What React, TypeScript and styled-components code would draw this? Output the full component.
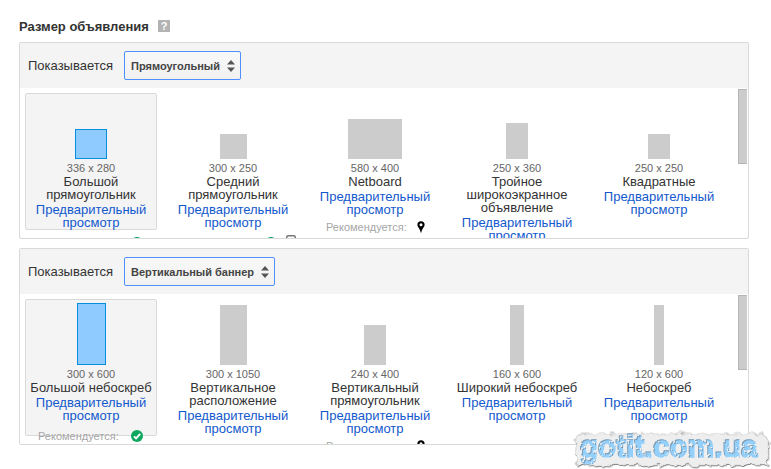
import React from 'react';
import styled, { createGlobalStyle, css } from 'styled-components';

const GlobalStyle = createGlobalStyle`
  * { box-sizing: border-box; }
  body {
    margin: 0;
    background: #fff;
    color: #333;
    font-family: 'Liberation Sans', Arial, sans-serif;
    font-size: 13px;
  }
`;

const Page = styled.main`
  position: relative;
  width: 771px;
  height: 469px;
  padding: 19px 0 0 19px;
  overflow: hidden;
`;

const TitleRow = styled.header`
  display: flex;
  align-items: center;
  gap: 9px;
  height: 15px;
  margin-bottom: 8px;
`;

const Title = styled.h1`
  margin: 0;
  width: 130px;
  font-size: 13px;
  line-height: 15px;
  font-weight: bold;
  white-space: nowrap;
`;

const Help = styled.span`
  display: grid;
  place-items: center;
  width: 12px;
  height: 12px;
  margin-top: -1px;
  background: #b3b3b3;
  color: #fff;
  font-size: 11px;
  line-height: 12px;
  font-weight: bold;
`;

const Panel = styled.section`
  width: 730px;
  height: 197px;
  margin-bottom: 9px;
  border: 1px solid #d9d9d9;
  border-radius: 2px;
  overflow: hidden;
`;

const Toolbar = styled.div`
  display: flex;
  align-items: center;
  height: 45px;
  padding-left: 8px;
  background: #f4f4f4;
`;

const Label = styled.span`
  width: 96px;
  line-height: 15px;
  margin-top: -1px;
`;

const Select = styled.button<{ $width: number }>`
  display: flex;
  align-items: center;
  justify-content: space-between;
  width: ${(p) => p.$width}px;
  height: 29px;
  padding: 0 5px 0 6px;
  border: 1px solid #4d90fe;
  border-radius: 2px;
  background: linear-gradient(#f8f8f8, #f1f1f1);
  color: #444;
  font: bold 11px 'Liberation Sans', Arial, sans-serif;
  white-space: nowrap;
`;

const Viewport = styled.div`
  display: flex;
  justify-content: space-between;
  height: 150px;
  padding: 0 1px 0 5px;
  overflow: hidden;
`;

const Thumb = styled.div`
  width: 9px;
  height: 75px;
  margin-top: 1px;
  border: 1px solid #b5b5b5;
  border-right: 0;
  background: #ccc;
`;

const Cells = styled.div`
  display: grid;
  grid-template-columns: repeat(5, 132px);
  column-gap: 10px;
  padding-top: 5px;
`;

const Cell = styled.article<{ $selected?: boolean }>`
  display: flex;
  flex-direction: column;
  align-items: center;
  height: 137px;
  border: 1px solid transparent;
  border-radius: 2px;
  text-align: center;
  ${(p) =>
    p.$selected &&
    css`
      border-color: #d9d9d9;
      background: #f4f4f4;
    `}
`;

const Stage = styled.div`
  display: flex;
  flex: none;
  align-items: flex-end;
  justify-content: center;
  height: 65px;
`;

const Shape = styled.div<{ $w: number; $h: number; $selected?: boolean }>`
  width: ${(p) => p.$w}px;
  height: ${(p) => p.$h}px;
  background: ${(p) => (p.$selected ? '#8fcbff' : '#ccc')};
  border: ${(p) => (p.$selected ? '1px solid #058dde' : '0')};
`;

const Dimensions = styled.div`
  margin-top: 3px;
  font-size: 11px;
  line-height: 13px;
  color: #666;
`;

const Name = styled.div`
  line-height: 13px;
  white-space: pre;
`;

const Preview = styled.a`
  margin-top: 2px;
  line-height: 13px;
  color: #1259cd;
  white-space: pre;
`;

const Recommended = styled.div<{ $kind: BadgeKind }>`
  display: flex;
  align-items: center;
  align-self: flex-start;
  flex: none;
  gap: ${(p) => (p.$kind === 'pin' ? 10 : 12)}px;
  height: 14px;
  margin-top: ${(p) => (p.$kind === 'pin' ? 4 : 7)}px;
  padding-left: ${(p) => ({ check: 12, pin: 16, 'check-phone': 4 })[p.$kind]}px;
  font-size: 11px;
  line-height: 14px;
  color: #a6a6a6;
  text-align: left;
`;

const RecommendedText = styled.span`
  width: 81px;
`;

const Badges = styled.span`
  display: flex;
  flex: none;
  align-items: center;
  gap: 9px;
  height: 14px;
`;

const WatermarkLayer = styled.svg`
  position: absolute;
  left: 570px;
  top: 427px;
`;

const Arrows = () => (
  <svg width="8" height="12" viewBox="0 0 8 12">
    <path d="M4 0 8 4.5H0zM0 7.5h8L4 12z" fill="#555" />
  </svg>
);

const CheckIcon = () => (
  <svg width="12" height="12" viewBox="0 0 12 12">
    <circle cx="6" cy="6" r="6" fill="#0fa760" />
    <path d="m3 6.3 2.1 2.1L9.2 3.9" fill="none" stroke="#fff" strokeWidth="1.9" />
  </svg>
);

const PinIcon = () => (
  <svg width="8" height="12" viewBox="0 0 8 12">
    <path
      d="M4 .2a3.6 3.6 0 0 1 3.6 3.6C7.6 6.3 4.6 8 4.4 11.6h-.8C3.4 8 .4 6.3.4 3.8A3.6 3.6 0 0 1 4 .2zm0 2a1.5 1.5 0 1 0 0 3 1.5 1.5 0 0 0 0-3z"
      fill="#000"
      fillRule="evenodd"
    />
  </svg>
);

const PhoneIcon = () => (
  <svg width="10" height="16" viewBox="0 0 10 16">
    <rect x=".75" y=".75" width="8.5" height="14.5" rx="1.5" fill="#fff" stroke="#777" strokeWidth="1.5" />
    <path d="M1 12h8" stroke="#999" />
  </svg>
);

type BadgeKind = 'check' | 'pin' | 'check-phone';

interface AdSize {
  size: string;
  name: string;
  w: number;
  h: number;
  selected?: boolean;
  badge?: BadgeKind;
}

const rectangles: AdSize[] = [
  { size: '336 x 280', name: 'Большой\nпрямоугольник', w: 32, h: 30, selected: true, badge: 'check' },
  { size: '300 x 250', name: 'Средний\nпрямоугольник', w: 27, h: 25, badge: 'check-phone' },
  { size: '580 x 400', name: 'Netboard', w: 54, h: 40, badge: 'pin' },
  { size: '250 x 360', name: 'Тройное\nширокоэкранное\nобъявление', w: 22, h: 36 },
  { size: '250 x 250', name: 'Квадратные', w: 22, h: 25 },
];

const verticals: AdSize[] = [
  { size: '300 x 600', name: 'Большой небоскреб', w: 29, h: 62, selected: true, badge: 'check' },
  { size: '300 x 1050', name: 'Вертикальное\nрасположение', w: 27, h: 60 },
  { size: '240 x 400', name: 'Вертикальный\nпрямоугольник', w: 22, h: 40, badge: 'pin' },
  { size: '160 x 600', name: 'Широкий небоскреб', w: 14, h: 60 },
  { size: '120 x 600', name: 'Небоскреб', w: 10, h: 60 },
];

const SizePanel = ({ value, width, items }: { value: string; width: number; items: AdSize[] }) => (
  <Panel>
    <Toolbar>
      <Label>Показывается</Label>
      <Select $width={width}>
        {value}
        <Arrows />
      </Select>
    </Toolbar>
    <Viewport>
      <Cells>
        {items.map((item) => (
          <Cell key={item.size} $selected={item.selected}>
            <Stage>
              <Shape $w={item.w} $h={item.h} $selected={item.selected} />
            </Stage>
            <Dimensions>{item.size}</Dimensions>
            <Name>{item.name}</Name>
            <Preview>{'Предварительный\nпросмотр'}</Preview>
            {item.badge && (
              <Recommended $kind={item.badge}>
                <RecommendedText>Рекомендуется:</RecommendedText>
                <Badges>
                  {item.badge !== 'pin' && <CheckIcon />}
                  {item.badge === 'pin' && <PinIcon />}
                  {item.badge === 'check-phone' && <PhoneIcon />}
                </Badges>
              </Recommended>
            )}
          </Cell>
        ))}
      </Cells>
      <Thumb />
    </Viewport>
  </Panel>
);

const Watermark = () => (
  <WatermarkLayer width="201" height="42" viewBox="0 0 201 42">
    <defs>
      <filter id="torn" x="-5%" y="-15%" width="110%" height="130%">
        <feTurbulence type="fractalNoise" baseFrequency=".14" numOctaves="2" seed="4" result="n" />
        <feDisplacementMap
          in="SourceGraphic"
          in2="n"
          scale="8"
          xChannelSelector="R"
          yChannelSelector="G"
          result="d"
        />
        <feDropShadow in="d" dx=".4" dy=".7" stdDeviation=".4" floodColor="#444" floodOpacity=".9" />
      </filter>
      <filter id="chalk" x="-5%" y="-15%" width="110%" height="130%">
        <feTurbulence type="fractalNoise" baseFrequency=".3" numOctaves="2" seed="9" result="n" />
        <feColorMatrix in="n" type="matrix" values="0 0 0 0 0  0 0 0 0 0  0 0 0 0 0  -14 0 0 0 9.6" result="m" />
        <feComposite in="SourceGraphic" in2="m" operator="in" />
      </filter>
      <filter id="relief" x="-5%" y="-15%" width="110%" height="130%">
        <feOffset in="SourceAlpha" dx="1.2" dy="1.2" result="o" />
        <feComposite in="SourceAlpha" in2="o" operator="out" result="edge" />
        <feFlood floodColor="#77828a" floodOpacity=".75" />
        <feComposite in2="edge" operator="in" result="shade" />
        <feMerge>
          <feMergeNode in="SourceGraphic" />
          <feMergeNode in="shade" />
        </feMerge>
      </filter>
    </defs>
    <rect x="6" y="7" width="192" height="31" rx="5" fill="#eee" stroke="#ccc" strokeWidth=".6" filter="url(#torn)" />
    <g filter="url(#relief)">
      <text
        x="9.5"
        y="30"
        textLength="178"
        lengthAdjust="spacingAndGlyphs"
        fontFamily="Liberation Sans, Arial, sans-serif"
        fontWeight="bold"
        fontSize="31"
        fill="#94d0fc"
        stroke="#94d0fc"
        strokeWidth="1.6"
        filter="url(#chalk)"
      >
        gotit.com.ua
      </text>
    </g>
  </WatermarkLayer>
);

export default function App() {
  return (
    <>
      <GlobalStyle />
      <Page>
        <TitleRow>
          <Title>Размер объявления</Title>
          <Help>?</Help>
        </TitleRow>
        <SizePanel value="Прямоугольный" width={117} items={rectangles} />
        <SizePanel value="Вертикальный баннер" width={151} items={verticals} />
        <Watermark />
      </Page>
    </>
  );
}
